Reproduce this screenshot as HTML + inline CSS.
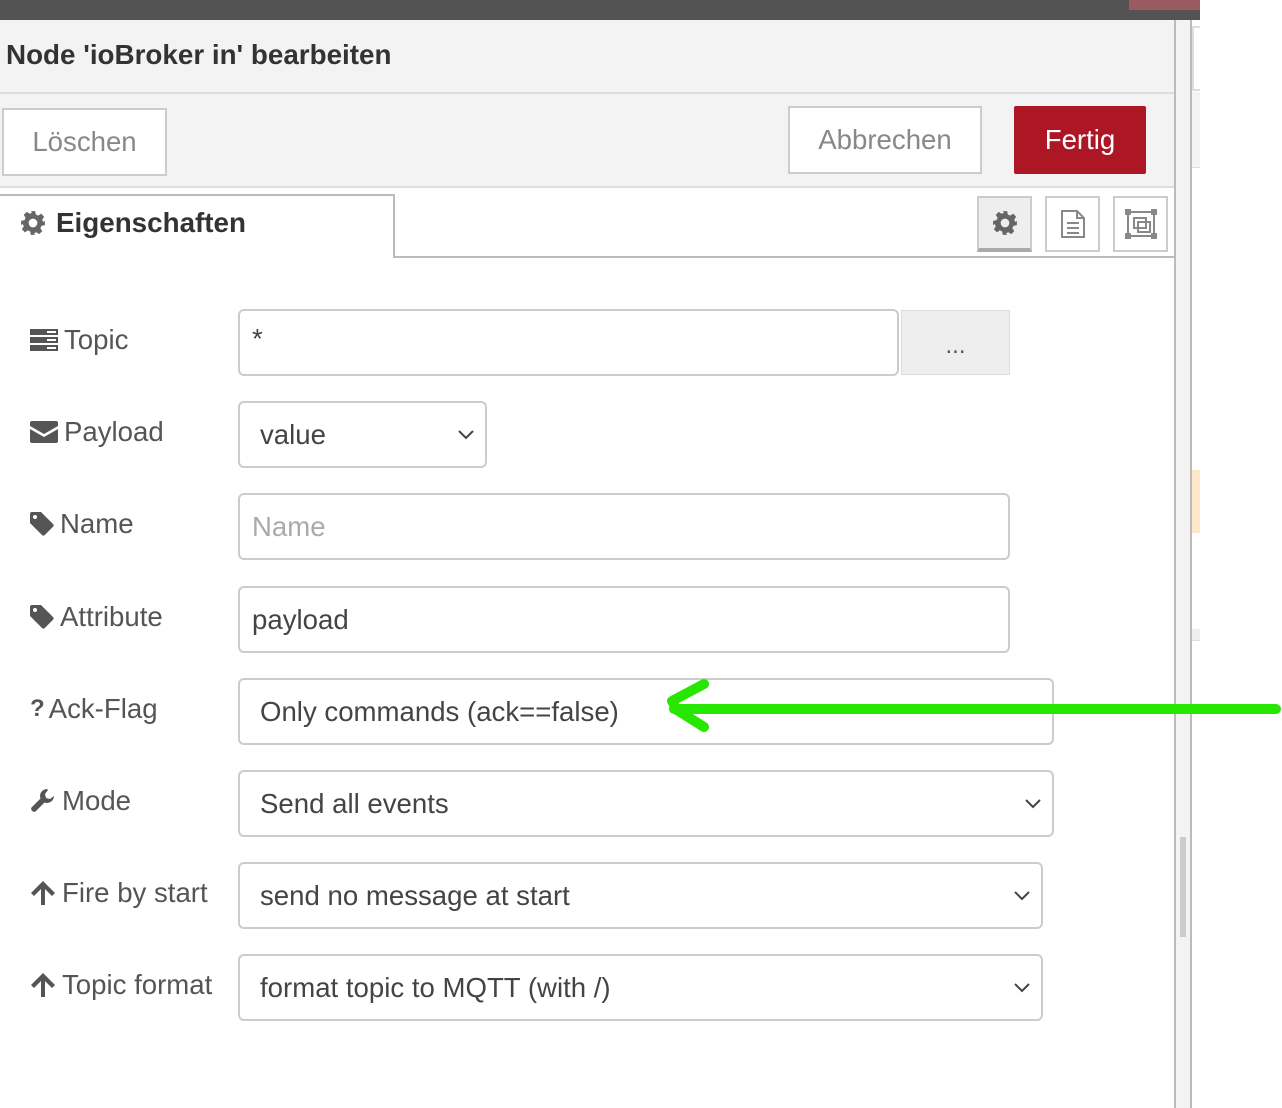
<!DOCTYPE html>
<html><head><meta charset="utf-8"><style>
*{box-sizing:border-box;margin:0;padding:0}
body{width:1282px;height:1108px;background:#fff;position:relative;overflow:hidden;font-family:"Liberation Sans",sans-serif;color:#555}
.a{position:absolute}
.inp{position:absolute;left:238px;height:67px;border:2px solid #ccc;border-radius:6px;background:#fff;font-size:27.6px;color:#444;line-height:63px;padding-left:20px}
.lab{position:absolute;left:30px;font-size:27.6px;color:#555;display:flex;align-items:center;gap:6px;height:34px}
.chev{position:absolute;right:10px;top:24px}
.btn{position:absolute;border:2px solid #ccc;background:#fff;font-size:27.6px;color:#888;text-align:center}
.tb{position:absolute;top:196px;width:55px;height:56px;border:2px solid #ccc;background:#fff}
</style></head><body>
<div class="a" style="left:0;top:0;width:1200px;height:20px;background:#535353"></div>
<div class="a" style="left:1129px;top:0;width:71px;height:10px;background:#9b5a62"></div>
<div class="a" style="left:0;top:20px;width:1174px;height:168px;background:#f3f3f3"></div>
<div class="a" style="left:0;top:92px;width:1174px;height:2px;background:#ddd"></div>
<div class="a" style="left:0;top:186px;width:1174px;height:2px;background:#ddd"></div>
<div class="a" style="left:6px;top:39px;font-size:27.8px;font-weight:bold;color:#333">Node 'ioBroker in' bearbeiten</div>
<div class="btn" style="left:2px;top:108px;width:165px;height:68px;line-height:64px">Löschen</div>
<div class="btn" style="left:788px;top:106px;width:194px;height:68px;line-height:64px">Abbrechen</div>
<div class="a" style="left:1014px;top:106px;width:132px;height:68px;background:#ad1625;border-radius:2px;color:#fff;font-size:27.6px;text-align:center;line-height:68px">Fertig</div>
<div class="a" style="left:1174px;top:20px;width:18px;height:1088px;background:#f3f3f3;border-left:2px solid #bbb;border-right:2px solid #bbb"></div>
<div class="a" style="left:1180px;top:837px;width:6px;height:100px;background:#ccc"></div>
<div class="a" style="left:1192px;top:470px;width:8px;height:63px;background:#fde9c9"></div>
<div class="a" style="left:1192px;top:629px;width:8px;height:12px;background:#eee;border-bottom:1px solid #ddd"></div>
<div class="a" style="left:1192px;top:26px;width:8px;height:65px;border-left:2px solid #ddd;border-top:2px solid #ddd;border-bottom:2px solid #ddd"></div>
<div class="a" style="left:1192px;top:92px;width:8px;height:76px;background:#f3f3f3;border-bottom:1px solid #ddd"></div>
<div class="a" style="left:-2px;top:194px;width:397px;height:64px;border:2px solid #bbb;border-bottom:none;background:#fff"></div>
<div class="a" style="left:394px;top:256px;width:780px;height:2px;background:#bbb"></div>
<div class="a" style="left:20px;top:207px;font-size:27.8px;font-weight:bold;color:#333;display:flex;align-items:center;gap:10px">
<svg width="26" height="26" viewBox="0 0 24 24"><path fill="#666" d="M10 1h4l.6 3.2 2.2 1 2.7-1.8 2.8 2.8-1.8 2.7 1 2.2L23 10v4l-3.2.6-1 2.2 1.8 2.7-2.8 2.8-2.7-1.8-2.2 1L14 23h-4l-.6-3.2-2.2-1-2.7 1.8-2.8-2.8 1.8-2.7-1-2.2L1 14v-4l3.2-.6 1-2.2L3.4 4.5l2.8-2.8 2.7 1.8 2.2-1zM12 8a4 4 0 100 8 4 4 0 000-8z"/></svg>Eigenschaften</div>
<div class="tb" style="left:977px;background:#eee;border-bottom:4px solid #aaa"><svg style="position:absolute;left:13px;top:12px" width="26" height="26" viewBox="0 0 24 24"><path fill="#666" d="M10 1h4l.6 3.2 2.2 1 2.7-1.8 2.8 2.8-1.8 2.7 1 2.2L23 10v4l-3.2.6-1 2.2 1.8 2.7-2.8 2.8-2.7-1.8-2.2 1L14 23h-4l-.6-3.2-2.2-1-2.7 1.8-2.8-2.8 1.8-2.7-1-2.2L1 14v-4l3.2-.6 1-2.2L3.4 4.5l2.8-2.8 2.7 1.8 2.2-1zM12 8a4 4 0 100 8 4 4 0 000-8z"/></svg></div>
<div class="tb" style="left:1045px"><svg style="position:absolute;left:13px;top:11px" width="26" height="30" viewBox="0 0 26 30"><path d="M2 2h15l7 7v19H2z M17 2v7h7 M7 14h12 M7 19h12 M7 24h12" fill="none" stroke="#888" stroke-width="2"/></svg></div>
<div class="tb" style="left:1113px"><svg style="position:absolute;left:9px;top:10px" width="34" height="32" viewBox="0 0 34 32"><path d="M4 4h26v24H4z M10 10h12v10H10z M14 14h12v10H14z" fill="none" stroke="#888" stroke-width="2"/><path fill="#888" d="M1 1h6v6H1zM27 1h6v6h-6zM1 25h6v6H1zM27 25h6v6h-6z"/></svg></div>
<div class="lab" style="top:323px"><svg width="28" height="22" viewBox="0 0 28 22"><path fill="#555" d="M0 0h28v6H0zM0 8h28v6H0zM0 16h28v6H0z"/><path fill="#fff" d="M17 2h9v2h-9zM17 10h9v2h-9zM17 18h9v2h-9z"/></svg>Topic</div>
<div class="inp" style="top:309px;width:661px;padding-left:12px;line-height:56px">*</div>
<div class="a" style="left:901px;top:310px;width:109px;height:65px;background:#eee;border:1px solid #ddd;font-size:24px;text-align:center;line-height:70px;color:#555">...</div>
<div class="lab" style="top:415px"><svg width="28" height="22" viewBox="0 0 28 22"><path fill="#555" d="M2 0h24a2 2 0 012 2v3L14 13 0 5V2a2 2 0 012-2zM0 8l14 8 14-8v12a2 2 0 01-2 2H2a2 2 0 01-2-2z"/></svg>Payload</div>
<div class="inp" style="top:401px;width:249px">value<svg class="chev" width="18" height="14" viewBox="0 0 18 14"><path d="M2 4l7 7 7-7" fill="none" stroke="#444" stroke-width="2"/></svg></div>
<div class="lab" style="top:507px"><svg width="24" height="24" viewBox="0 0 24 24"><path fill="#555" d="M0 2a2 2 0 012-2h9l12 12a2 2 0 010 2.8l-8.2 8.2a2 2 0 01-2.8 0L0 11zM5 3a2 2 0 100 4 2 2 0 000-4z"/></svg>Name</div>
<div class="inp" style="top:493px;width:772px;padding-left:12px;color:#aaa">Name</div>
<div class="lab" style="top:600px"><svg width="24" height="24" viewBox="0 0 24 24"><path fill="#555" d="M0 2a2 2 0 012-2h9l12 12a2 2 0 010 2.8l-8.2 8.2a2 2 0 01-2.8 0L0 11zM5 3a2 2 0 100 4 2 2 0 000-4z"/></svg>Attribute</div>
<div class="inp" style="top:586px;width:772px;padding-left:12px">payload</div>
<div class="lab" style="top:692px;gap:4px"><span style="font-weight:bold;font-size:24px">?</span>Ack-Flag</div>
<div class="inp" style="top:678px;width:816px">Only commands (ack==false)</div>
<div class="lab" style="top:784px"><svg width="26" height="26" viewBox="0 0 26 26"><path fill="#555" d="M17 1a7 7 0 00-6.5 9.5L1.5 19.5a3 3 0 004 4l9-9A7 7 0 0024 8l-4 3-4-1-1-4 3-4z"/></svg>Mode</div>
<div class="inp" style="top:770px;width:816px">Send all events<svg class="chev" width="18" height="14" viewBox="0 0 18 14"><path d="M2 4l7 7 7-7" fill="none" stroke="#444" stroke-width="2"/></svg></div>
<div class="lab" style="top:876px"><svg width="26" height="24" viewBox="0 0 26 24"><path fill="#555" d="M13 0l12 12-3 3-7-7v16h-4V8l-7 7-3-3z"/></svg>Fire by start</div>
<div class="inp" style="top:862px;width:805px">send no message at start<svg class="chev" width="18" height="14" viewBox="0 0 18 14"><path d="M2 4l7 7 7-7" fill="none" stroke="#444" stroke-width="2"/></svg></div>
<div class="lab" style="top:968px"><svg width="26" height="24" viewBox="0 0 26 24"><path fill="#555" d="M13 0l12 12-3 3-7-7v16h-4V8l-7 7-3-3z"/></svg>Topic format</div>
<div class="inp" style="top:954px;width:805px">format topic to MQTT (with /)<svg class="chev" width="18" height="14" viewBox="0 0 18 14"><path d="M2 4l7 7 7-7" fill="none" stroke="#444" stroke-width="2"/></svg></div>
<svg class="a" style="left:0;top:0" width="1282" height="1108"><path d="M674 709L1276 709M704 684L672 701L677 710L704 727" fill="none" stroke="#27e600" stroke-width="10" stroke-linecap="round" stroke-linejoin="round"/></svg>
</body></html>
